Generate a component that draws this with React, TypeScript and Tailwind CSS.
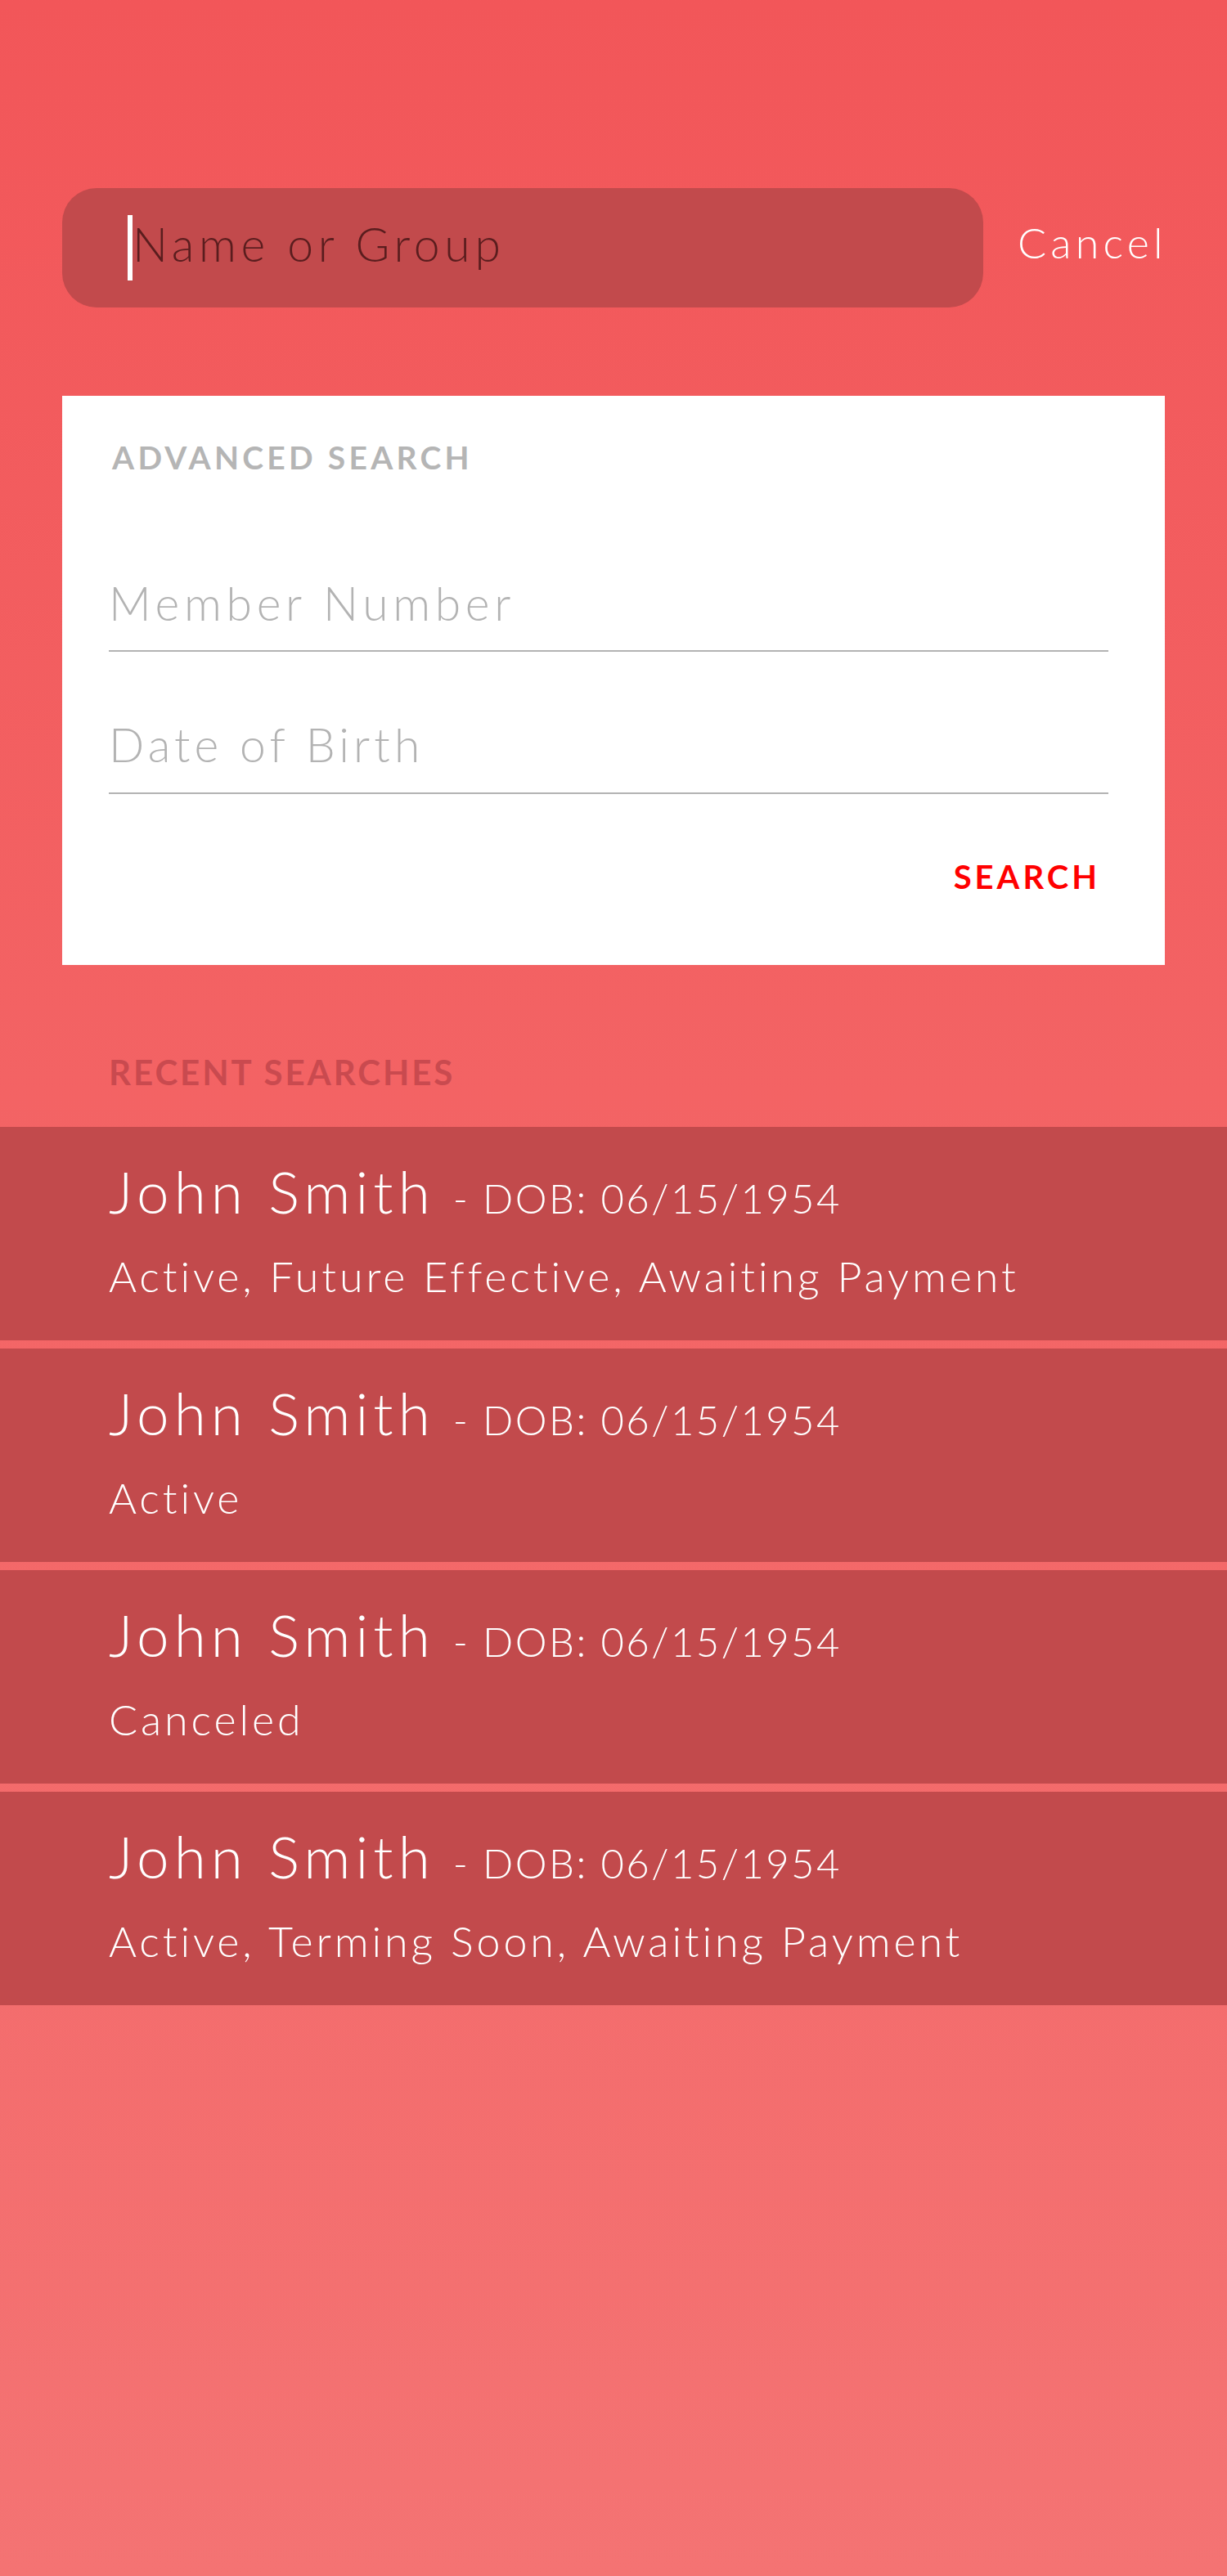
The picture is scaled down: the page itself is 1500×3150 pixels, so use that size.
import React from "react";

const rows = [
  "Active, Future Effective, Awaiting Payment",
  "Active",
  "Canceled",
  "Active, Terming Soon, Awaiting Payment",
];

export default function App() {
  return (
    <div
      className="w-[1500px] min-h-[3150px] bg-gradient-to-b from-[#F25659] to-[#F47373]"
      style={{ fontFamily: "Lato, 'Open Sans', sans-serif" }}
    >
      {/* search bar */}
      <div className="pt-[230px] pl-[76px] flex items-center">
        <div className="w-[1126px] h-[146px] rounded-[42px] bg-[#C24A4C] flex items-center pl-[80px]">
          <span className="w-[6px] h-[80px] bg-white"></span>
          <span className="pb-[10px] text-[57px] leading-none font-light tracking-[0.1em] text-[#5A1D1E]">
            Name or Group
          </span>
        </div>
        <span className="ml-[42px] pb-[15px] text-[52px] leading-none font-light tracking-[0.1em] text-white">
          Cancel
        </span>
      </div>

      {/* advanced search card */}
      <div className="mt-[108px] ml-[76px] w-[1348px] h-[696px] bg-white pl-[57px] pr-[69px]">
        <div className="pt-[55px] ml-[4px] text-[39px] leading-[40px] font-bold tracking-[0.11em] text-[#B5B5B5]">
          ADVANCED SEARCH
        </div>
        <div className="mt-[128px] pb-[28px] border-b-2 border-[#B3B3B3]">
          <div className="text-[57px] leading-[60px] font-light tracking-[0.1em] text-[#B3B3B3]">
            Member Number
          </div>
        </div>
        <div className="mt-[83px] pb-[29px] border-b-2 border-[#B3B3B3]">
          <div className="text-[57px] leading-[60px] font-light tracking-[0.09em] text-[#B3B3B3]">
            Date of Birth
          </div>
        </div>
        <div className="mt-[81px] flex justify-end pr-[10px]">
          <span className="text-[40px] leading-[40px] font-bold tracking-[0.1em] text-[#FF0000]">
            SEARCH
          </span>
        </div>
      </div>

      {/* recent searches */}
      <div className="mt-[110px] pl-[133px] text-[42px] leading-[42px] font-bold tracking-[0.07em] text-[#C94A4F]">
        RECENT SEARCHES
      </div>
      <div className="mt-[46px] flex flex-col gap-[10px]">
        {rows.map((status, i) => (
          <div key={i} className="h-[261px] bg-[#C24A4C] pl-[133px] text-white">
            <div className="pt-[43px] flex items-baseline">
              <span className="text-[71px] leading-[71px] font-light tracking-[0.085em]">John Smith</span>
              <span className="ml-[22px] text-[49px] leading-[71px] font-light tracking-[0.05em]">
                - DOB: 06/15/1954
              </span>
            </div>
            <div className="mt-[33px] text-[52px] leading-[52px] font-light tracking-[0.075em]">{status}</div>
          </div>
        ))}
      </div>
    </div>
  );
}
